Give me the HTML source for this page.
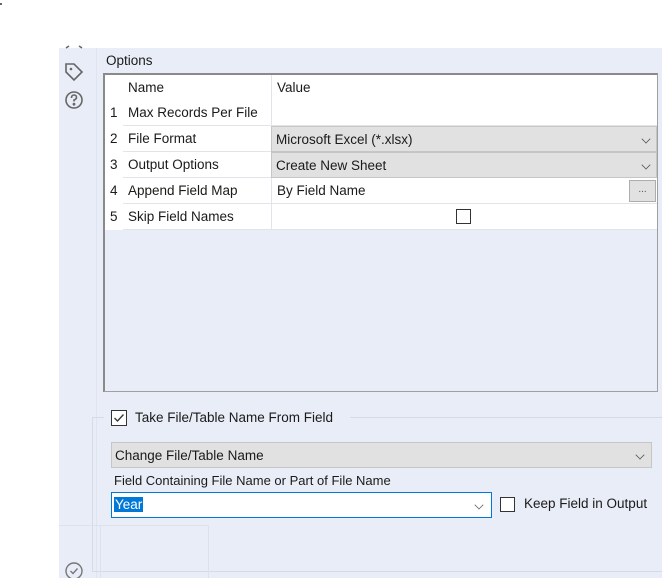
<!DOCTYPE html>
<html style="overflow:hidden;width:662px;height:578px"><head><style>
*{margin:0;padding:0;box-sizing:border-box}
body{width:662px;height:578px;background:#fff;position:relative;overflow:hidden;font-family:"Liberation Sans",sans-serif;font-size:13.5px;color:#1a1a1a}
.a{position:absolute}
.t{position:absolute;white-space:nowrap}
.row{position:absolute;left:105px;width:552px;height:26px;border-bottom:1px solid #e2e4ea;background:#fff}
.num{position:absolute;left:5px;top:5px}
.nm{position:absolute;left:23px;top:5px}
.val{position:absolute;left:166px;top:0;width:386px;height:26px;border-left:1px solid #e2e4ea}
.dd{background:#e1e1e1;border:1px solid #c6c6c6}
.chev{position:absolute;right:6px;top:8px;width:8px;height:8px;border-right:1.3px solid #555;border-bottom:1.3px solid #555;transform:rotate(45deg) scale(.8);transform-origin:center}
</style></head><body>
<div class="a" style="left:0;width:2px;height:2px;background:#666;top:3px"></div>
<div class="a" style="left:59px;top:48px;width:603px;height:530px;background:#e9edf7"></div>
<div class="a" style="left:96px;top:48px;width:1px;height:530px;background:#e0e4ee"></div>
<svg class="a" style="left:62px;top:44px" width="24" height="70" viewBox="0 0 24 70" fill="none" stroke="#666" stroke-width="1.6">
<path d="M7 2 L4 4 M17 2 L20 4"/>
<path d="M4 20 L4 28 L12 36 L20 28 L12 20 Z"/>
<circle cx="9" cy="25" r="1.3" fill="#666" stroke="none"/>
<circle cx="12" cy="56" r="8"/>
<path d="M9.5 54 Q9.5 51 12 51 Q14.5 51 14.5 53.5 Q14.5 55 12 56 L12 57.5"/>
<circle cx="12" cy="60.2" r="0.6" fill="#666"/>
</svg>
<svg class="a" style="left:64px;top:561px" width="20" height="17" viewBox="0 0 20 17" fill="none" stroke="#777" stroke-width="1.4"><circle cx="10" cy="10" r="8"/><path d="M6.5 10 L9 12.5 L13.5 7.5"/></svg>
<div class="t" style="left:106px;top:53px">Options</div>
<div class="a" style="left:103px;top:73px;width:555px;height:319px;border:1px solid #a0a0a0;border-left:2px solid #8a8a8a;border-top:2px solid #8a8a8a;background:#e9edf7"></div>
<div class="row" style="top:75px;height:25px;border-bottom:none"><div class="nm" style="top:5px">Name</div><div class="val" style="height:25px"><span class="t" style="left:5px;top:5px">Value</span></div></div>
<div class="row" style="top:100px"><div class="nm">Max Records Per File</div><div class="val"></div></div>
<div class="row" style="top:126px"><div class="nm">File Format</div><div class="val dd"><span class="t" style="left:4px;top:5px">Microsoft Excel (*.xlsx)</span><div class="chev"></div></div></div>
<div class="row" style="top:152px"><div class="nm">Output Options</div><div class="val dd"><span class="t" style="left:4px;top:5px">Create New Sheet</span><div class="chev"></div></div></div>
<div class="row" style="top:178px"><div class="nm">Append Field Map</div><div class="val"><span class="t" style="left:5px;top:5px">By Field Name</span><div class="a" style="right:1px;top:2px;width:27px;height:22px;background:#e1e1e1;border:1px solid #adadad;font-size:10px;text-align:center;line-height:18px;color:#555">...</div></div></div>
<div class="row" style="top:204px"><div class="nm">Skip Field Names</div><div class="val"><div class="a" style="left:184px;top:5px;width:15px;height:15px;border:1px solid #333;background:#fff"></div></div></div>
<div class="a" style="left:105px;top:100px;width:18px;height:130px;background:#fff"></div>
<div class="t" style="left:110px;top:105px">1</div><div class="t" style="left:110px;top:131px">2</div><div class="t" style="left:110px;top:157px">3</div><div class="t" style="left:110px;top:183px">4</div><div class="t" style="left:110px;top:209px">5</div>
<div class="a" style="left:92px;top:417px;width:570px;height:155px;border:1px solid #d6dae4;border-right:none"></div>
<div class="a" style="left:104px;top:408px;width:246px;height:20px;background:#e9edf7"></div>
<div class="a" style="left:111px;top:410px;width:16px;height:16px;border:1px solid #333;background:#fff"></div>
<svg class="a" style="left:111px;top:410px" width="16" height="16"><path d="M3.5 8 L6.5 11 L12.5 4.5" stroke="#333" stroke-width="1.3" fill="none"/></svg>
<div class="t" style="left:135px;top:410px">Take File/Table Name From Field</div>
<div class="a dd" style="left:111px;top:442px;width:541px;height:26px"><span class="t" style="left:3px;top:5px">Change File/Table Name</span><div class="chev" style="right:7px"></div></div>
<div class="t" style="left:114px;top:473px;font-size:13px">Field Containing File Name or Part of File Name</div>
<div class="a" style="left:111px;top:492px;width:381px;height:26px;border:1px solid #0078d7;background:#fff"><span class="t" style="left:2px;top:4px;background:#0078d7;color:#fff;padding:0 1px">Year</span><div class="chev" style="right:8px;border-color:#666"></div></div>
<div class="a" style="left:500px;top:497px;width:15px;height:15px;border:1px solid #333;background:#fff"></div>
<div class="t" style="left:524px;top:496px">Keep Field in Output</div>
<div class="a" style="left:59px;top:525px;width:150px;height:53px;border-top:1px solid #dde1ea;border-right:1px solid #dde1ea"></div>
<div class="a" style="left:100px;top:525px;width:1px;height:53px;background:#dde1ea"></div>
</body></html>
